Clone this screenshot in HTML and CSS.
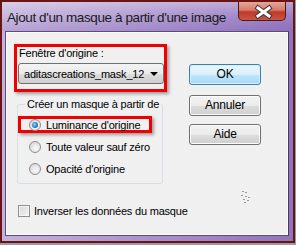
FILE: index.html
```html
<!doctype html>
<html lang="fr">
    <head>
        <meta charset="utf-8">
        <title>Ajout d'un masque</title>
        <link rel="stylesheet" href="styles.css">
    </head>
    <body>
        <div class="window">
            <div class="titlebar">
                <span class="title">Ajout d'un masque à partir d'une image</span>
                <div class="close">
                    <svg width="48" height="19" viewBox="0 0 48 19">
                        <path d="M20 6 L31 14 M31 6 L20 14" stroke="#3a3a48" stroke-width="5" stroke-linecap="square"/>
                        <path d="M20 6 L31 14 M31 6 L20 14" stroke="#fff" stroke-width="3" stroke-linecap="square"/>
                    </svg>
                </div>
            </div>
            <div class="client">
                <div class="left">
                    <div class="mark source">
                        <div class="label">Fenêtre d'origine :</div>
                        <div class="combo">
                            <span>aditascreations_mask_12</span>
                            <span class="arrow"></span>
                        </div>
                    </div>
                    <fieldset class="group">
                        <legend>Créer un masque à partir de</legend>
                        <div class="row mark">
                            <span class="radio checked"></span>
                            <span>Luminance d'origine</span>
                        </div>
                        <div class="row">
                            <span class="radio"></span>
                            <span>Toute valeur sauf zéro</span>
                        </div>
                        <div class="row">
                            <span class="radio"></span>
                            <span>Opacité d'origine</span>
                        </div>
                    </fieldset>
                    <div class="check-row">
                        <span class="checkbox"></span>
                        <span>Inverser les données du masque</span>
                    </div>
                </div>
                <div class="buttons">
                    <div class="btn default">OK</div>
                    <div class="btn">Annuler</div>
                    <div class="btn help">Aide</div>
                </div>
                <svg class="grip" width="14" height="16" viewBox="0 0 14 16">
                    <g fill="#9a9a9a">
                        <rect x="2" y="2" width="2" height="1"/>
                        <rect x="5" y="3" width="2" height="1"/>
                        <rect x="1" y="6" width="2" height="1"/>
                        <rect x="5" y="7" width="2" height="1"/>
                        <rect x="8" y="8" width="2" height="1"/>
                        <rect x="3" y="10" width="2" height="1"/>
                        <rect x="7" y="11" width="2" height="1"/>
                        <rect x="4" y="13" width="2" height="1"/>
                    </g>
                </svg>
            </div>
        </div>
    </body>
</html>
```

FILE: styles.css
```css
body {
	margin: 0;
	background: #9c9c9c;
	font-family: "Liberation Sans", Arial, sans-serif;
	font-size: 11px;
	letter-spacing: -0.2px;
	white-space: nowrap;
	color: #000;
}

.window {
	box-sizing: border-box;
	width: 295px;
	height: 243px;
	border: 2px solid #6a1414;
	background: linear-gradient(to right, #c3b2dc 0%, #a58ccb 60%, #9173bd 100%);
	display: flex;
	flex-direction: column;
	padding: 0 4px 5px 3px;
}

.titlebar {
	height: 29px;
	display: flex;
	justify-content: space-between;
	align-items: flex-start;
	margin: 0 -4px 0 -3px;
	padding-left: 5px;
	background: linear-gradient(to bottom, rgba(255,255,255,0.35) 0%, rgba(255,255,255,0.1) 45%, rgba(120,90,170,0.15) 100%);
}

.title {
	font-size: 13.5px;
	letter-spacing: -0.4px;
	line-height: 15px;
	margin-top: 8px;
	color: #1a1a1a;
}

.close {
	width: 48px;
	height: 19px;
	margin-right: 7px;
	box-sizing: border-box;
	border: 1px solid #4c1a1a;
	border-top: 0;
	border-radius: 0 0 5px 5px;
	background: linear-gradient(to bottom, #e8a596 0%, #d57a6a 45%, #c0392a 55%, #c9553f 100%);
}

.close svg {
	display: block;
	margin-left: -1px;
}

.client {
	flex: 1;
	position: relative;
	display: grid;
	grid-template-columns: 153px 72px;
	column-gap: 22px;
	align-items: start;
	padding: 12px 0 0 8px;
	background: #f0f0f0;
	border: 1px solid #5e4b7c;
	box-shadow: inset 0 0 0 1px #fbfbfb;
	border-right-color: #4a3a66;
}

.mark {
	box-sizing: border-box;
	border: 3px solid #f00000;
	box-shadow: 2px 2px 3px rgba(0,0,0,0.35);
}

.source {
	height: 48px;
	padding: 0 0 0 2px;
}

.label {
	line-height: 13px;
}

.combo {
	box-sizing: border-box;
	width: 146px;
	height: 21px;
	margin: 3px 0 0 -1px;
	border: 1px solid #707070;
	border-radius: 3px;
	background: linear-gradient(to bottom, #f3f3f3 0%, #ebebeb 50%, #dddddd 51%, #cfcfcf 100%);
	display: flex;
	align-items: center;
	justify-content: space-between;
	padding: 0 5px 0 5px;
}

.arrow {
	width: 0;
	height: 0;
	border-left: 4px solid transparent;
	border-right: 4px solid transparent;
	border-top: 4px solid #000;
}

.group {
	width: 146px;
	box-sizing: border-box;
	margin: 6px 0 0 3px;
	padding: 3px 0 3px 0;
	border: 1px solid #d5dfe5;
	border-radius: 3px;
}

.group legend {
	line-height: 13px;
	padding: 0 2px;
	margin-left: 7px;
}

.row {
	height: 22px;
	display: flex;
	align-items: center;
	gap: 5px;
	padding-left: 11px;
}

.row.mark {
	width: 134px;
	height: 17px;
	margin: 2px 0 3px;
	padding-left: 8px;
}

.radio {
	flex-shrink: 0;
	box-sizing: border-box;
	width: 12px;
	height: 12px;
	border-radius: 50%;
	border: 1px solid #8d8d8d;
	background: radial-gradient(circle at 60% 65%, #f8f8f8 0%, #e6e6e6 50%, #cdcdcd 100%);
	display: flex;
	align-items: center;
	justify-content: center;
}

.radio.checked::after {
	content: "";
	width: 6px;
	height: 6px;
	border-radius: 50%;
	background: radial-gradient(circle at 40% 40%, #9ad6f8 0%, #2d86c8 50%, #134c88 100%);
}

.check-row {
	display: flex;
	align-items: center;
	gap: 4px;
	margin: 19px 0 0 4px;
	height: 16px;
}

.checkbox {
	flex-shrink: 0;
	box-sizing: border-box;
	width: 12px;
	height: 12px;
	border: 1px solid #8e8f8f;
	background: linear-gradient(135deg, #d8d8d8 0%, #f4f4f4 100%);
	box-shadow: inset 0 0 0 1px #f4f4f4;
}

.buttons {
	display: flex;
	flex-direction: column;
	margin-top: 20px;
}

.btn {
	box-sizing: border-box;
	height: 21px;
	border: 1px solid #707070;
	border-radius: 3px;
	background: linear-gradient(to bottom, #f2f2f2 0%, #ebebeb 50%, #dddddd 51%, #cfcfcf 100%);
	box-shadow: inset 0 0 0 1px #fcfcfc;
	text-align: center;
	font-size: 12px;
	line-height: 19px;
	margin-top: 10px;
}

.btn.default {
	margin-top: 0;
	border-color: #3c7fb1;
	background: linear-gradient(to bottom, #eaf6fd 0%, #d9f0fc 50%, #bee6fd 51%, #a7d9f5 100%);
	box-shadow: inset 0 0 0 1px #d8f0fb;
}

.btn.help {
	margin-top: 8px;
}

.grip {
	position: absolute;
	left: 234px;
	top: 157px;
}
```
